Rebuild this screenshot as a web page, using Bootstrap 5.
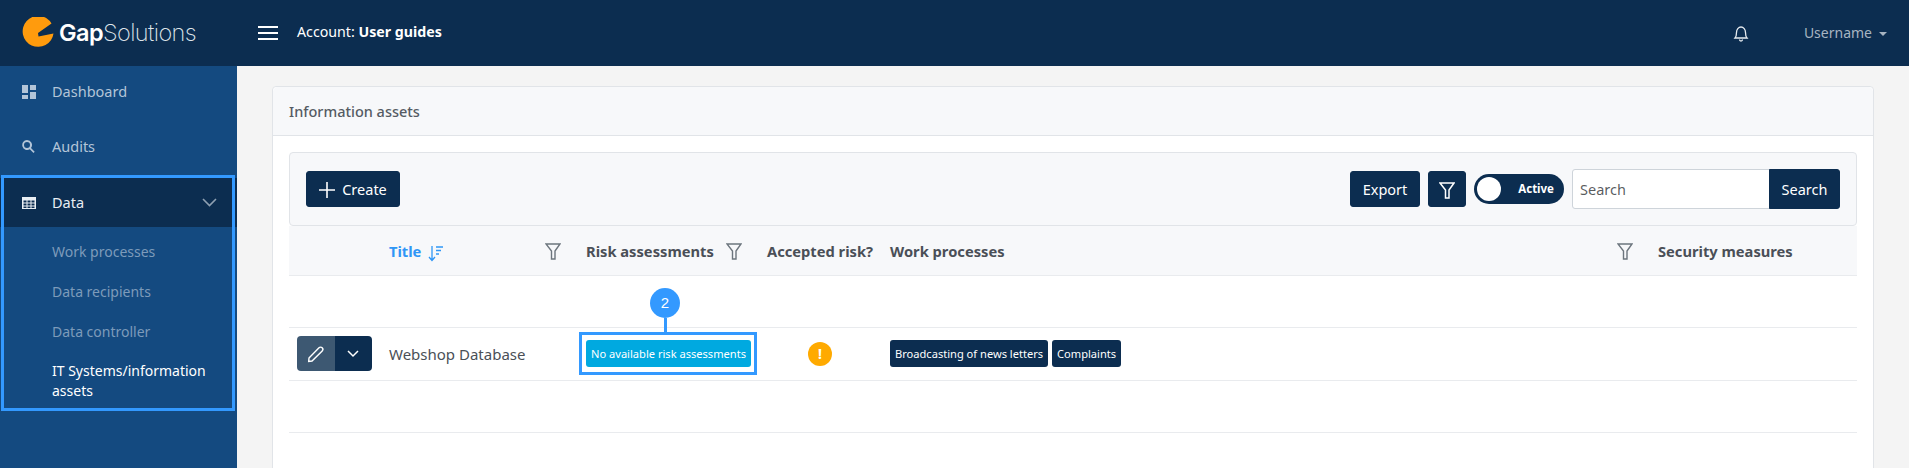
<!doctype html>
<html lang="en"><head><meta charset="utf-8"><title>Information assets</title>
<link href="https://cdn.jsdelivr.net/npm/bootstrap@5.3.0/dist/css/bootstrap.min.css" rel="stylesheet">
<style>
html,body{height:468px;overflow:hidden;background:#fff}
body{font-family:"Noto Sans",sans-serif;font-size:15px;color:#4a4f57}
.shell{margin-right:4px;height:468px;position:relative;overflow:hidden}
.topbar{height:66px;background:#0c2d50;color:#fff;padding:0}
.brandbox{width:237px;padding-left:22px;gap:5px}
.logotext{font-family:Inter,sans-serif;font-size:23.5px;letter-spacing:-.6px;color:#dfe5ea;font-weight:200;line-height:1}
.logotext b{font-weight:600;color:#fff}
.burger{width:20px;height:14px;margin:0 19px 0 21px;border-top:2px solid #fff;border-bottom:2px solid #fff;position:relative}
.burger::after{content:"";position:absolute;left:0;right:0;top:4px;height:2px;background:#fff}
.acct{font-size:14.2px;padding-bottom:2px}
.uname{font-size:14px;color:#a7b4c1;margin-right:22px;padding-bottom:2px}
.bellmark{margin-right:55px}
.caretmark{display:inline-block;border:4px solid transparent;border-top-color:#a7b4c1;border-bottom:0;margin-left:7px;vertical-align:middle}
.lower{height:402px}
.sidemenu{width:237px;background:#144a80;flex:none}
.sidemenu a{display:flex;align-items:center;text-decoration:none;color:#b3c5d8;font-size:14.5px}
.mainitem{height:52px;padding-left:22px;gap:16px}
.mainitem.audititem{height:57px}
.mainitem svg{flex:none;width:14px;height:14px;fill:currentColor}
.mainitem.openitem{background:#0c2d50;color:#e9eef3;height:49px;margin-top:3px;padding-right:20px;margin-bottom:4px}
.subitem{padding:0 20px 0 52px;height:40px;color:#7d9bba!important;font-size:14px!important}
.subitem.activeitem{color:#fff!important;height:auto;line-height:20px;padding-top:10px}
.workarea{background:#f4f4f4;padding:20px 35px 0;flex:1;min-width:0}
.assetcard{border-color:#e1e4e8;border-radius:4px;height:500px}
.assetcard .card-header{height:49px;background:#f7f8fa;border-color:#e1e4e8;font-size:14.5px;font-weight:500;padding:2px 16px 0;display:flex;align-items:center;color:#555b63}
.assetcard .card-body{padding:16px}
.toolstrip{height:74px;background:#f7f8fa;border:1px solid #e1e4e8;border-radius:4px;padding:0 16px}
.navbtn{background:#0c2d50;border-color:#0c2d50;color:#fff;font-size:14.5px;height:36px;padding:2px 0 0;border-radius:3px;display:inline-flex;align-items:center;justify-content:center}
.navbtn:hover{background:#0c2d50;color:#fff}
.btn-create{width:94px;gap:7px}.btn-export{width:70px}.btn-funnel{width:38px}
.switchpill{width:90px;height:30px;border-radius:15px;background:#0c2d50;position:relative;color:#fff;font-size:11.5px;font-weight:700;display:flex;align-items:center;justify-content:flex-end;padding-right:10px;flex:none}
.switchpill::before{content:"";position:absolute;left:3px;top:3px;width:24px;height:24px;border-radius:50%;background:#fff}
.searchgroup{width:268px;height:40px;flex:none}
.searchgroup .form-control{height:40px;font-size:14.5px;padding:0 7px;border-color:#ced4da;border-radius:3px 0 0 3px;box-shadow:none}
.searchgroup .navbtn{width:71px;height:40px;border-radius:0 3px 3px 0}
.datatable{table-layout:fixed;width:1568px;margin:0;--bs-table-bg:transparent;color:#4a4f57;font-size:15px}
.datatable th,.datatable td{padding:0 8px;vertical-align:middle;border-color:#e9ebee}
.datatable thead th{height:49px;background:#f7f8fa;font-size:14.7px;font-weight:700;color:#4a4f57;white-space:nowrap;padding-top:2px}
.datatable tbody tr{height:52.5px}
.titlehead{color:#2f96f6!important}
.headflex{display:flex;align-items:center;justify-content:space-between;padding-right:9px}
.funnelmark{width:16px;height:17px;fill:none;stroke:#6c757d;stroke-width:1.4;flex:none}
.actiongroup{height:35px;width:75px}
.actiongroup .btn{padding:0;height:35px;border:0;display:flex;align-items:center;justify-content:center}
.editbtn{width:38px;background:#3d5872;border-radius:4px 0 0 4px}
.morebtn{width:37px;background:#0c2d50;border-radius:0 4px 4px 0}
.tagitem{display:inline-block;height:27px;line-height:28px;border-radius:3px;font-size:11.1px;color:#fff;padding:0 5px;background:#0c2d50;white-space:nowrap;vertical-align:middle}
.tagitem.tagrisk{background:#00a9e0;width:165px;text-align:center;padding:0}
.warnmark{width:24px;height:24px;border-radius:50%;background:#ffaa00;color:#fff;font-weight:700;font-size:14px;line-height:24px;text-align:center;margin-left:41px}
.callbox{position:absolute;border:3px solid #3399ff;pointer-events:none}
.sidebox{left:1px;top:175px;width:234px;height:236px}
.tagbox{left:579px;top:332px;width:178px;height:43px}
.callnum{position:absolute;left:650px;top:288px;width:30px;height:30px;border-radius:50%;background:#3399ff;color:#fff;text-align:center;line-height:30px;font-size:15px;font-family:"Liberation Sans",sans-serif}
.callline{position:absolute;left:664px;top:318px;width:3px;height:14px;background:#3399ff}
</style></head><body>
<div class="shell">
<nav class="navbar topbar d-flex flex-nowrap align-items-center">
  <div class="brandbox d-flex align-items-center">
    <svg width="32" height="32" viewBox="0 0 32 32"><path fill="#ff9b0d" d="M29.500 6.500A15.500 15.500 0 1 0 31.500 16.500L16.500 19.500L16 16Z"/></svg>
    <span class="logotext"><b>Gap</b>Solutions</span>
  </div>
  <span class="burger"></span>
  <span class="acct">Account: <b>User guides</b></span>
  <span class="ms-auto d-flex align-items-center">
    <svg class="bellmark" width="16" height="17" viewBox="0 0 16 17" fill="none" stroke="#e6ebf0" stroke-width="1.3"><path d="M2 13c1.300-1.400 1.500-3 1.500-5.500C3.500 4.500 5.500 2 8 2s4.500 2.500 4.500 5.500c0 2.500.2 4.100 1.500 5.500Z"/><path d="M6.500 14.500a1.500 1.500 0 0 0 3 0" /></svg>
    <span class="uname">Username<span class="caretmark"></span></span>
  </span>
</nav>
<div class="lower d-flex">
  <aside class="sidemenu">
    <a class="mainitem" href="#"><svg viewBox="0 0 14 14"><path d="M0 0h6v8H0zM8 0h6v5H8zM0 10h6v4H0zM8 7h6v7H8z"/></svg>Dashboard</a>
    <a class="mainitem audititem" href="#"><svg viewBox="0 0 14 14"><path fill-rule="evenodd" d="M5 0a5 5 0 0 1 4 8l3.700 3.700-1.200 1.300L7.800 9.300A5 5 0 1 1 5 0Zm0 2a3 3 0 1 0 0 6 3 3 0 0 0 0-6Z"/></svg>Audits</a>
    <a class="mainitem openitem" href="#"><svg viewBox="0 0 14 14"><path fill-rule="evenodd" d="M0 1h14v12H0ZM1.500 4.500v2h3v-2Zm4 0v2h3v-2Zm4 0v2h3v-2Zm-8 3v2h3v-2Zm4 0v2h3v-2Zm4 0v2h3v-2Zm-8 3v1.500h3v-1.500Zm4 0v1.500h3v-1.500Zm4 0v1.500h3v-1.500Z"/></svg>Data
      <svg class="ms-auto" style="width:15px;height:9px" viewBox="0 0 15 9"><path fill="none" stroke="#8fa0b2" stroke-width="1.6" d="M1 1l6.500 6.500L14 1"/></svg></a>
    <a class="subitem" href="#">Work processes</a>
    <a class="subitem" href="#">Data recipients</a>
    <a class="subitem" href="#">Data controller</a>
    <a class="subitem activeitem" href="#">IT Systems/information assets</a>
  </aside>
  <main class="workarea">
    <div class="card assetcard">
      <div class="card-header">Information assets</div>
      <div class="card-body">
        <div class="toolstrip d-flex align-items-center gap-2">
          <button class="btn navbtn btn-create"><svg width="16" height="16" viewBox="0 0 16 16"><path stroke="#fff" stroke-width="1.6" d="M8 0v16M0 8h16"/></svg>Create</button>
          <button class="btn navbtn btn-export ms-auto">Export</button>
          <button class="btn navbtn btn-funnel"><svg width="16" height="17" viewBox="0 0 16 17" fill="none" stroke="#fff" stroke-width="1.5"><path d="M1 1h14L10 8v8H6.500V8Z"/></svg></button>
          <div class="switchpill">Active</div>
          <div class="input-group searchgroup"><input class="form-control" placeholder="Search" aria-label="Search"><button class="btn navbtn">Search</button></div>
        </div>
        <table class="table datatable">
          <colgroup><col style="width:92px"><col style="width:197px"><col style="width:181px"><col style="width:123px"><col style="width:768px"><col style="width:207px"></colgroup>
          <thead><tr><th></th>
            <th class="titlehead"><div class="headflex"><span>Title <svg width="15" height="17" viewBox="0 0 15 17" fill="none" stroke="#2f96f6" stroke-width="1.3" style="margin-left:3px"><path d="M4 1v14M1 12l3 3.500L7 12M8 2h7M8 5.500h5M8 9h3"/></svg></span><svg class="funnelmark" viewBox="0 0 16 17"><path d="M1 1h14L10 8v8H6.500V8Z"/></svg></div></th>
            <th><div class="headflex"><span>Risk assessments</span><svg class="funnelmark" viewBox="0 0 16 17"><path d="M1 1h14L10 8v8H6.500V8Z"/></svg></div></th>
            <th>Accepted risk?</th>
            <th><div class="headflex"><span>Work processes</span><svg class="funnelmark" viewBox="0 0 16 17"><path d="M1 1h14L10 8v8H6.500V8Z"/></svg></div></th>
            <th>Security measures</th></tr></thead>
          <tbody>
            <tr><td colspan="6"></td></tr>
            <tr>
              <td><div class="btn-group actiongroup"><button class="btn editbtn" aria-label="Edit"><svg width="18" height="18" viewBox="0 0 18 18" fill="none" stroke="#fff" stroke-width="1.4"><path d="M2 13 12 2.800a2.200 2.200 0 0 1 3.200 3.100L5 16l-3.300.5Z"/></svg></button><button class="btn morebtn" aria-label="More"><svg width="12" height="8" viewBox="0 0 12 8" fill="none" stroke="#fff" stroke-width="1.5"><path d="M1 1l5 5 5-5"/></svg></button></div></td>
              <td>Webshop Database</td>
              <td><span class="tagitem tagrisk">No available risk assessments</span></td>
              <td><div class="warnmark">!</div></td>
              <td><span class="tagitem">Broadcasting of news letters</span> <span class="tagitem">Complaints</span></td>
              <td></td>
            </tr>
            <tr><td colspan="6"></td></tr>
          </tbody>
        </table>
      </div>
    </div>
  </main>
</div>
<div class="callbox sidebox"></div>
<div class="callbox tagbox"></div>
<div class="callline"></div>
<div class="callnum">2</div>
</div>
<script src="https://cdn.jsdelivr.net/npm/bootstrap@5.3.0/dist/js/bootstrap.bundle.min.js"></script>
</body></html>
